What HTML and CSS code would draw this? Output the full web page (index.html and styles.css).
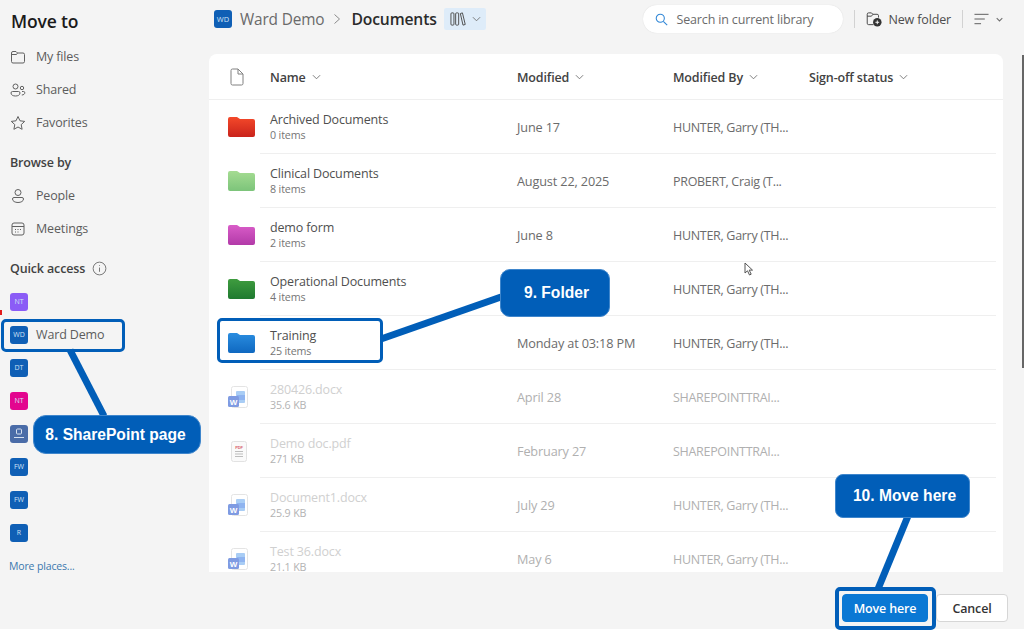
FILE: index.html
```html
<!DOCTYPE html>
<html lang="en">
<head>
    <meta charset="UTF-8">
    <meta name="viewport" content="width=device-width, initial-scale=1.0">
    <title>Move to</title>
    <link rel="stylesheet" href="styles.css">
</head>
<body>
    <svg class="sprites" width="0" height="0">
        <defs>
            <linearGradient id="g-red" x1="0" y1="0" x2="0" y2="1"><stop offset="0" stop-color="#f4492a"/><stop offset="1" stop-color="#c9231b"/></linearGradient>
            <linearGradient id="g-lime" x1="0" y1="0" x2="0" y2="1"><stop offset="0" stop-color="#a5dc92"/><stop offset="1" stop-color="#7cc47a"/></linearGradient>
            <linearGradient id="g-pink" x1="0" y1="0" x2="0" y2="1"><stop offset="0" stop-color="#d95cc8"/><stop offset="1" stop-color="#b23aa8"/></linearGradient>
            <linearGradient id="g-green" x1="0" y1="0" x2="0" y2="1"><stop offset="0" stop-color="#3f9c3f"/><stop offset="1" stop-color="#1f7a30"/></linearGradient>
            <linearGradient id="g-blue" x1="0" y1="0" x2="0" y2="1"><stop offset="0" stop-color="#2a8de0"/><stop offset="1" stop-color="#0f68c0"/></linearGradient>
            <symbol id="word" viewBox="0 0 20 22">
                <rect x="3.5" y="0.5" width="16" height="21" rx="2" fill="#fff" stroke="#e4e4e4"/>
                <rect x="8" y="5" width="9" height="12" rx="1" fill="#a9cdf5"/>
                <rect x="9" y="9" width="8" height="5" fill="#8fb4f0"/>
                <rect x="0" y="10" width="11" height="11" rx="1.5" fill="#7f9be2"/>
                <text x="5.5" y="18.5" text-anchor="middle" class="word-w">W</text>
            </symbol>
        </defs>
    </svg>

    <div class="page">
        <aside class="sidebar">
            <h1 class="title">Move to</h1>
            <a class="nav-item">
                <svg class="nav-icon" viewBox="0 0 16 16"><path d="M1.5 4a1.500 1.500 0 0 1 1.500-1.500h3l1.500 1.500H13A1.500 1.500 0 0 1 14.500 5.500v7A1.500 1.500 0 0 1 13 14H3a1.500 1.500 0 0 1-1.500-1.500zM1.500 5.500h5L7.500 4"/></svg>
                My files
            </a>
            <a class="nav-item">
                <svg class="nav-icon" viewBox="0 0 16 16"><circle cx="5.5" cy="4.5" r="2.5"/><path d="M1 11a1.500 1.500 0 0 1 1.500-1.500h6A1.500 1.500 0 0 1 10 11c0 2-2 3-4.500 3S1 13 1 11z"/><circle cx="12" cy="6" r="1.7"/><path d="M12 9.500h1.500a1.300 1.300 0 0 1 1.300 1.300c0 1.300-1.300 2.200-3 2.200"/></svg>
                Shared
            </a>
            <a class="nav-item">
                <svg class="nav-icon" viewBox="0 0 16 16"><path d="M8 1.500l2 4.300 4.700.6-3.500 3.200.9 4.700L8 12l-4.100 2.300.9-4.700L1.300 6.400 6 5.800z"/></svg>
                Favorites
            </a>
            <h2 class="nav-heading">Browse by</h2>
            <a class="nav-item">
                <svg class="nav-icon" viewBox="0 0 16 16"><circle cx="8" cy="4.5" r="3"/><path d="M2.500 11a1.500 1.500 0 0 1 1.500-1.500h8a1.500 1.500 0 0 1 1.500 1.500c0 2.200-2.500 3.500-5.500 3.500S2.500 13.200 2.500 11z"/></svg>
                People
            </a>
            <a class="nav-item">
                <svg class="nav-icon" viewBox="0 0 16 16"><rect x="2" y="2" width="12" height="12" rx="2"/><path d="M2 5.500h12M5 8.500h1M7.500 8.500h1M10 8.500h1M5 11h1M7.500 11h1"/></svg>
                Meetings
            </a>
            <h2 class="nav-heading">Quick access
                <svg class="info" viewBox="0 0 16 16"><circle cx="8" cy="8" r="6.8"/><path d="M8 7v4.500M8 4.500v.8"/></svg>
            </h2>
            <a class="nav-item site"><span class="tile purple">NT</span></a>
            <a class="nav-item site"><span class="tile">WD</span>Ward Demo</a>
            <a class="nav-item site"><span class="tile">DT</span></a>
            <a class="nav-item site"><span class="tile pink">NT</span></a>
            <a class="nav-item site"><span class="tile slate"><svg class="slate-logo" viewBox="0 0 12 12"><rect x="3.5" y="1" width="5" height="5" rx="1"/><path d="M1 9.500h10"/></svg></span></a>
            <a class="nav-item site"><span class="tile">FW</span></a>
            <a class="nav-item site"><span class="tile">FW</span></a>
            <a class="nav-item site"><span class="tile">R</span></a>
            <a class="more">More places...</a>
        </aside>

        <main class="content">
            <div class="toolbar">
                <span class="tile crumb-tile">WD</span>
                <span class="crumb">Ward Demo</span>
                <svg class="crumb-sep" viewBox="0 0 10 12"><path d="M2.500 1.500L7.500 6l-5 4.500"/></svg>
                <span class="crumb current">Documents</span>
                <span class="lib-btn">
                    <svg class="lib-icon" viewBox="0 0 17 16"><rect x="1" y="1.5" width="3.2" height="13" rx="1"/><rect x="6" y="1.5" width="3.2" height="13" rx="1"/><path d="M11 2.200l2.200-.7 3 12.300-2.400.7z"/></svg>
                    <svg class="chev" viewBox="0 0 10 6"><path d="M1 1l4 4 4-4"/></svg>
                </span>
                <div class="search">
                    <svg class="search-icon" viewBox="0 0 16 16"><circle cx="6.5" cy="6.5" r="5"/><path d="M10.200 10.200l4.800 4.800"/></svg>
                    Search in current library
                </div>
                <span class="divider"></span>
                <span class="new-folder">
                    <svg class="nf-icon" viewBox="0 0 17 17"><path d="M8 14.500H2.800a1.500 1.500 0 0 1-1.500-1.500V3.500A1.500 1.500 0 0 1 2.800 2h3l1.500 1.500h4.500A1.500 1.500 0 0 1 13.300 5v2M1.300 5.500h4.500l1.500-2"/><circle class="nf-dot" cx="12" cy="12" r="4.5"/><path class="nf-plus" d="M12 10v4M10 12h4"/></svg>
                    New folder
                </span>
                <span class="divider"></span>
                <svg class="sort-icon" viewBox="0 0 16 12"><path d="M0.500 1h15M0.500 6h11M0.500 11h7"/></svg>
                <svg class="chev small" viewBox="0 0 10 6"><path d="M1 1l4 4 4-4"/></svg>
            </div>

            <div class="panel">
                <div class="row head">
                    <span class="cell-icon"><svg class="file-head" viewBox="0 0 14 18"><path d="M1 2.500A1.500 1.500 0 0 1 2.500 1H8l5 5v9.500a1.500 1.500 0 0 1-1.500 1.500h-9A1.500 1.500 0 0 1 1 15.500zM8 1v5h5"/></svg></span>
                    <span class="cell-name">Name <svg class="chev" viewBox="0 0 10 6"><path d="M1 1l4 4 4-4"/></svg></span>
                    <span class="cell-date">Modified <svg class="chev" viewBox="0 0 10 6"><path d="M1 1l4 4 4-4"/></svg></span>
                    <span class="cell-by">Modified By <svg class="chev" viewBox="0 0 10 6"><path d="M1 1l4 4 4-4"/></svg></span>
                    <span class="cell-status">Sign-off status <svg class="chev" viewBox="0 0 10 6"><path d="M1 1l4 4 4-4"/></svg></span>
                </div>

                <div class="row">
                    <span class="cell-icon"><svg class="folder" viewBox="0 0 27 20"><path fill="url(#g-red)" d="M0 2a2 2 0 0 1 2-2h7l3 2h13a2 2 0 0 1 2 2v14a2 2 0 0 1-2 2H2a2 2 0 0 1-2-2z"/></svg></span>
                    <span class="cell-name"><span class="name">Archived Documents</span><span class="meta">0 items</span></span>
                    <span class="cell-date">June 17</span>
                    <span class="cell-by">HUNTER, Garry (TH...</span>
                </div>
                <div class="row">
                    <span class="cell-icon"><svg class="folder" viewBox="0 0 27 20"><path fill="url(#g-lime)" d="M0 2a2 2 0 0 1 2-2h7l3 2h13a2 2 0 0 1 2 2v14a2 2 0 0 1-2 2H2a2 2 0 0 1-2-2z"/></svg></span>
                    <span class="cell-name"><span class="name">Clinical Documents</span><span class="meta">8 items</span></span>
                    <span class="cell-date">August 22, 2025</span>
                    <span class="cell-by">PROBERT, Craig (T...</span>
                </div>
                <div class="row">
                    <span class="cell-icon"><svg class="folder" viewBox="0 0 27 20"><path fill="url(#g-pink)" d="M0 2a2 2 0 0 1 2-2h7l3 2h13a2 2 0 0 1 2 2v14a2 2 0 0 1-2 2H2a2 2 0 0 1-2-2z"/></svg></span>
                    <span class="cell-name"><span class="name">demo form</span><span class="meta">2 items</span></span>
                    <span class="cell-date">June 8</span>
                    <span class="cell-by">HUNTER, Garry (TH...</span>
                </div>
                <div class="row">
                    <span class="cell-icon"><svg class="folder" viewBox="0 0 27 20"><path fill="url(#g-green)" d="M0 2a2 2 0 0 1 2-2h7l3 2h13a2 2 0 0 1 2 2v14a2 2 0 0 1-2 2H2a2 2 0 0 1-2-2z"/></svg></span>
                    <span class="cell-name"><span class="name">Operational Documents</span><span class="meta">4 items</span></span>
                    <span class="cell-date"></span>
                    <span class="cell-by">HUNTER, Garry (TH...</span>
                </div>
                <div class="row">
                    <span class="cell-icon"><svg class="folder" viewBox="0 0 27 20"><path fill="url(#g-blue)" d="M0 2a2 2 0 0 1 2-2h7l3 2h13a2 2 0 0 1 2 2v14a2 2 0 0 1-2 2H2a2 2 0 0 1-2-2z"/></svg></span>
                    <span class="cell-name"><span class="name">Training</span><span class="meta">25 items</span></span>
                    <span class="cell-date">Monday at 03:18 PM</span>
                    <span class="cell-by">HUNTER, Garry (TH...</span>
                </div>
                <div class="row disabled">
                    <span class="cell-icon"><svg class="doc-icon"><use href="#word"/></svg></span>
                    <span class="cell-name"><span class="name">280426.docx</span><span class="meta">35.6 KB</span></span>
                    <span class="cell-date">April 28</span>
                    <span class="cell-by">SHAREPOINTTRAI...</span>
                </div>
                <div class="row disabled">
                    <span class="cell-icon">
                        <svg class="pdf-icon" viewBox="0 0 16 21"><rect x="0.5" y="0.5" width="15" height="20" rx="2" fill="#fafafa" stroke="#e2e2e2"/><text x="8" y="7.5" text-anchor="middle" class="pdf-label">PDF</text><path d="M4 10.500h8M4 13h8M4 15.500h8" stroke="#bdbdbd" fill="none"/></svg>
                    </span>
                    <span class="cell-name"><span class="name">Demo doc.pdf</span><span class="meta">271 KB</span></span>
                    <span class="cell-date">February 27</span>
                    <span class="cell-by">SHAREPOINTTRAI...</span>
                </div>
                <div class="row disabled">
                    <span class="cell-icon"><svg class="doc-icon"><use href="#word"/></svg></span>
                    <span class="cell-name"><span class="name">Document1.docx</span><span class="meta">25.9 KB</span></span>
                    <span class="cell-date">July 29</span>
                    <span class="cell-by">HUNTER, Garry (TH...</span>
                </div>
                <div class="row disabled">
                    <span class="cell-icon"><svg class="doc-icon"><use href="#word"/></svg></span>
                    <span class="cell-name"><span class="name">Test 36.docx</span><span class="meta">21.1 KB</span></span>
                    <span class="cell-date">May 6</span>
                    <span class="cell-by">HUNTER, Garry (TH...</span>
                </div>
            </div>

            <div class="actions">
                <button class="btn primary">Move here</button>
                <button class="btn">Cancel</button>
            </div>
        </main>
    </div>

    <!-- annotations drawn over the screenshot -->
    <svg class="leaders" viewBox="0 0 1024 630">
        <path d="M70 350L104 416"/>
        <path d="M381 339L501 297"/>
        <path d="M908 516L878 589"/>
    </svg>
    <div class="mark mark-site"></div>
    <div class="mark mark-folder"></div>
    <div class="mark mark-move"></div>
    <div class="callout callout-8">8. SharePoint page</div>
    <div class="callout callout-9">9. Folder</div>
    <div class="callout callout-10">10. Move here</div>
    <svg class="cursor" viewBox="0 0 10 14"><path d="M1 1v10l2.500-2.200L5.500 13l1.700-.8-2-4.100H8.500z"/></svg>
    <span class="red-tick"></span>
    <span class="scroll-edge"></span>
</body>
</html>
```

FILE: styles.css
```css
* {
    box-sizing: border-box;
}
html, body {
    margin: 0;
    height: 630px;
    overflow: hidden;
}
body {
    position: relative;
    font-family: "Open Sans", "Noto Sans", sans-serif;
    font-size: 12.5px;
    letter-spacing: -0.15px;
    color: #424242;
    background-color: #fff;
}
.sprites {
    position: absolute;
}
.page {
    display: flex;
    height: 629px;
    background-color: #f4f4f4;
}

/* left column */
.sidebar {
    width: 209px;
    flex: none;
    padding: 8px 0 0 10px;
}
.title {
    margin: 0 0 6px 1px;
    height: 26px;
    font-size: 17.5px;
    line-height: 26px;
    font-weight: 600;
    color: #1b1b1b;
}
.nav-item {
    display: flex;
    align-items: center;
    gap: 10px;
    height: 33px;
    color: #5c5c5c;
}
.nav-icon {
    width: 16px;
    height: 16px;
    flex: none;
    fill: none;
    stroke: #616161;
    stroke-width: 1;
}
.nav-heading {
    display: flex;
    align-items: center;
    gap: 7px;
    margin: 7px 0 0;
    height: 33px;
    font-size: 12.5px;
    font-weight: 600;
    color: #424242;
}
.info {
    width: 15px;
    height: 15px;
    fill: none;
    stroke: #707070;
    stroke-width: 1;
}
.site {
    gap: 8px;
}
.tile {
    display: flex;
    align-items: center;
    justify-content: center;
    width: 18px;
    height: 18px;
    flex: none;
    border-radius: 3px;
    font-size: 7px;
    letter-spacing: 0;
    color: #cfe2f5;
    background-color: #0f5fb5;
}
.purple {
    background-color: #8b5cf6;
}
.pink {
    background-color: #e3068f;
}
.slate {
    background-color: #4a6ca8;
}
.slate-logo {
    width: 12px;
    height: 12px;
    fill: none;
    stroke: #d5e0f0;
    stroke-width: 1;
}
.more {
    display: flex;
    align-items: center;
    height: 33px;
    margin-left: -1px;
    font-size: 10.5px;
    color: #3b78ae;
}

/* right column */
.content {
    flex: 1;
    min-width: 0;
    display: flex;
    flex-direction: column;
}
.toolbar {
    display: flex;
    align-items: center;
    height: 38px;
    padding: 0 21px 0 5px;
    flex: none;
}
.crumb-tile {
    margin-right: 8px;
    font-size: 7.5px;
}
.crumb {
    font-size: 15.4px;
    color: #6a6a6a;
}
.crumb.current {
    font-size: 15.7px;
    font-weight: 600;
    color: #2b2b2b;
}
.crumb-sep {
    width: 10px;
    height: 12px;
    margin: 0 9px 0 8px;
    fill: none;
    stroke: #8a8a8a;
}
.lib-btn {
    display: flex;
    align-items: center;
    gap: 6px;
    width: 42px;
    height: 22px;
    margin-left: 7px;
    padding-left: 6px;
    background-color: #deecf9;
    border-radius: 2px;
}
.lib-icon {
    width: 16px;
    height: 16px;
    fill: none;
    stroke: #4a4a4a;
}
.chev {
    width: 9px;
    height: 6px;
    fill: none;
    stroke: #707070;
    stroke-width: 1;
}
.chev.small {
    width: 7px;
    height: 5px;
    margin-left: 7px;
    stroke-width: 1.5;
}
.search {
    display: flex;
    align-items: center;
    gap: 8px;
    width: 200px;
    height: 28px;
    margin-left: auto;
    padding-left: 12px;
    border-radius: 14px;
    background-color: #fff;
    box-shadow: 0 0 1px #d0d0d0;
    color: #6b6b6b;
}
.search-icon {
    width: 13px;
    height: 13px;
    flex: none;
    fill: none;
    stroke: #2f86d6;
    stroke-width: 1.3;
}
.divider {
    width: 1px;
    height: 18px;
    margin: 0 11px;
    background-color: #d2d2d2;
}
.new-folder {
    display: flex;
    align-items: center;
    gap: 6px;
    color: #4d4d4d;
}
.nf-icon {
    width: 16px;
    height: 16px;
    fill: none;
    stroke: #424242;
}
.nf-dot {
    fill: #333;
    stroke: none;
}
.nf-plus {
    stroke: #fff;
}
.sort-icon {
    width: 15px;
    height: 12px;
    fill: none;
    stroke: #555;
}

.panel {
    height: 518px;
    width: 794px;
    margin-top: 16px;
    flex: none;
    overflow: hidden;
    background-color: #fff;
    border-radius: 8px 8px 0 0;
}
.row {
    display: grid;
    grid-template-columns: 61px 247px 156px 136px 1fr;
    align-items: center;
    position: relative;
    height: 54px;
    color: #6b6b6b;
}
.row::after {
    content: "";
    position: absolute;
    left: 51px;
    right: 7px;
    bottom: 0;
    height: 1px;
    background-color: #efefef;
}
.row.head {
    height: 46px;
    font-weight: 600;
    color: #424242;
}
.row.head::after {
    left: 0;
    right: 0;
}
.row.head .chev {
    margin-left: 3px;
    vertical-align: 2px;
}
.cell-icon {
    display: flex;
    padding-left: 19px;
}
.cell-name {
    display: block;
}
.cell-date {
    font-size: 12.7px;
}
.cell-by {
    letter-spacing: -0.3px;
}
.head .cell-date, .head .cell-by {
    font-size: 12.5px;
    letter-spacing: -0.15px;
}
.name {
    display: block;
    line-height: 17px;
    color: #4f4f4f;
}
.meta {
    display: block;
    line-height: 15px;
    font-size: 10.7px;
    color: #757575;
}
.folder {
    width: 27px;
    height: 20px;
}
.doc-icon {
    width: 20px;
    height: 22px;
}
.word-w {
    font: 700 8px "Liberation Sans", Arial, sans-serif;
    fill: #fff;
}
.pdf-icon {
    width: 16px;
    height: 21px;
    margin-left: 3px;
}
.pdf-label {
    font: 700 4px "Liberation Sans", Arial, sans-serif;
    fill: #d9636b;
}
.file-head {
    width: 14px;
    height: 18px;
    margin-left: 2px;
    fill: none;
    stroke: #808080;
}
.disabled .name {
    color: #d0d0d0;
}
.disabled .meta {
    color: #b3b3b3;
}
.disabled .cell-date, .disabled .cell-by {
    color: #b0b0b0;
}
.actions {
    display: flex;
    justify-content: flex-end;
    gap: 8px;
    padding: 22px 16px 0 0;
}
.btn {
    height: 28px;
    width: 72px;
    font: 600 12.5px "Open Sans", "Noto Sans", sans-serif;
    letter-spacing: -0.15px;
    color: #333;
    background-color: #fff;
    border: 1px solid #d6d6d6;
    border-radius: 4px;
}
.btn.primary {
    width: 86px;
    color: #fff;
    background-color: #0a78d4;
    border-color: #0a78d4;
}

/* annotations */
.leaders {
    position: absolute;
    left: 0;
    top: 0;
    width: 1024px;
    height: 630px;
    fill: none;
    stroke: #015eb8;
    stroke-width: 7;
}
.mark {
    position: absolute;
    border: 3px solid #015eb8;
    border-radius: 5px;
}
.mark-site {
    left: 1px;
    top: 319px;
    width: 124px;
    height: 33px;
}
.mark-folder {
    left: 217px;
    top: 318px;
    width: 166px;
    height: 45px;
}
.mark-move {
    left: 835px;
    top: 587px;
    width: 101px;
    height: 43px;
    border-width: 4px;
}
.callout {
    position: absolute;
    display: flex;
    align-items: center;
    justify-content: center;
    font-family: "Liberation Sans", Arial, sans-serif;
    font-weight: 700;
    font-size: 15.6px;
    letter-spacing: 0;
    color: #fff;
    background-color: #015eb8;
    border: 1px solid #3f86cc;
}
.callout-8 {
    left: 33px;
    top: 415px;
    width: 168px;
    height: 39px;
    padding-right: 3px;
    border-radius: 13px;
}
.callout-9 {
    left: 500px;
    top: 269px;
    width: 110px;
    height: 48px;
    padding-left: 3px;
    border-radius: 10px;
}
.callout-10 {
    left: 835px;
    top: 474px;
    width: 135px;
    height: 44px;
    padding-left: 4px;
    border-radius: 8px;
}
.cursor {
    position: absolute;
    left: 744px;
    top: 262px;
    width: 10px;
    height: 14px;
    fill: #fff;
    stroke: #555;
    stroke-width: 1;
}
.red-tick {
    position: absolute;
    left: 0;
    top: 310px;
    width: 2px;
    height: 5px;
    background-color: #e21b1b;
}
.scroll-edge {
    position: absolute;
    left: 1022px;
    top: 55px;
    width: 2px;
    height: 313px;
    background-color: #666;
}
```
